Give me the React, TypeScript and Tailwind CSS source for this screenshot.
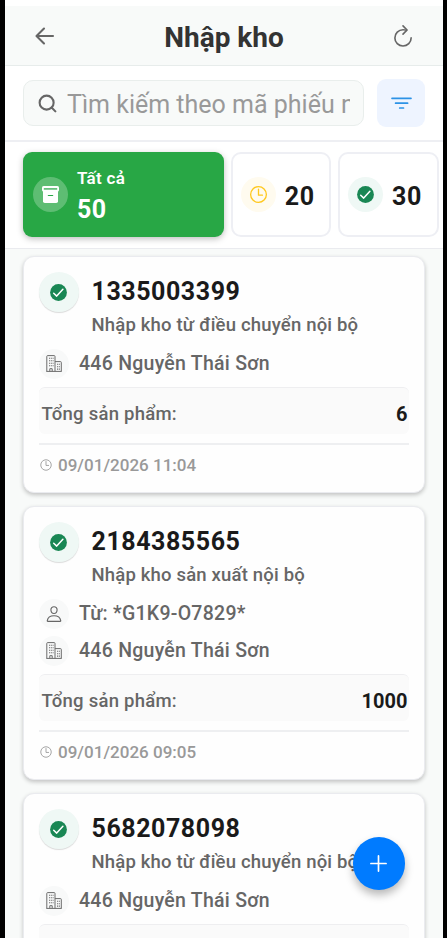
import { useState } from "react"
import { Search } from "lucide-react"
import { IoAdd, IoPersonOutline, IoRefreshOutline, IoTimeOutline } from "react-icons/io5"

type Receipt = {
  code: string
  type: string
  from?: string
  branch: string
  total: number
  createdAt: string
}

const receipts: Receipt[] = [
  { code: "1335003399", type: "Nhập kho từ điều chuyển nội bộ", branch: "446 Nguyễn Thái Sơn", total: 6, createdAt: "09/01/2026 11:04" },
  { code: "2184385565", type: "Nhập kho sản xuất nội bộ", from: "*G1K9-O7829*", branch: "446 Nguyễn Thái Sơn", total: 1000, createdAt: "09/01/2026 09:05" },
  { code: "5682078098", type: "Nhập kho từ điều chuyển nội bộ", branch: "446 Nguyễn Thái Sơn", total: 12, createdAt: "09/01/2026 08:41" },
]

const BackIcon = () => (
  <svg viewBox="0 0 20 18" className="h-[18px] w-5" fill="none" stroke="#666" strokeWidth="2.1" strokeLinecap="round" strokeLinejoin="round">
    <path d="M9 1.6 1.5 9 9 16.4M2 9h16" />
  </svg>
)

const CheckIcon = () => (
  <svg viewBox="0 0 17 17" className="h-[17px] w-[17px]" fill="none">
    <circle cx="8.5" cy="8.5" r="8.4" fill="#198754" />
    <path d="m3.7 9.2 3 2.9 6.2-6.9" stroke="#fff" strokeWidth="1.5" strokeLinecap="round" strokeLinejoin="round" />
  </svg>
)

const ArchiveIcon = () => (
  <svg viewBox="0 0 17 17" className="h-[17px] w-[17px]" fill="none">
    <path d="M1 5h15v10.2a1.8 1.8 0 0 1-1.8 1.8H2.8A1.8 1.8 0 0 1 1 15.2z" fill="#fff" />
    <rect width="17" height="5.6" rx="1.6" fill="#fff" />
    <path d="M1.8 2.9h13.4" stroke="#62bd78" strokeWidth="1.7" />
    <path d="M6.3 9.5h4.4" stroke="#28a745" strokeWidth="1.1" strokeLinecap="round" />
  </svg>
)

const FilterIcon = () => (
  <svg viewBox="0 0 21 12" className="h-3 w-[21px]" fill="none" stroke="#2c92e6" strokeWidth="1.7" strokeLinecap="round">
    <path d="M1 1.3h19M4.6 6.2h12M8.7 11h3.8" />
  </svg>
)

const BuildingIcon = () => (
  <svg viewBox="0 0 16 17" className="h-[17px] w-4" fill="none" stroke="#6b6b6b">
    <path d="M.8 16.3V1.4A.8.8 0 0 1 1.6.6h6.6a.8.8 0 0 1 .8.8v14.9M9 6.6h5.5a.8.8 0 0 1 .8.8v8.9M.3 16.4h15.4M3.8 16.3v-2.6h2.4v2.6" />
    <path d="M3 3.2h4.6M3 5.7h4.6M3 8.2h4.6M3 10.7h4.6M11 9.3h3M11 11.7h3M11 14.1h3" strokeWidth="1.1" strokeDasharray="1.1 .7" />
  </svg>
)

const InfoRow = ({ icon, text }: { icon: any; text: string }) => (
  <div className="flex h-[37px] items-center">
    <div className="flex h-[30px] w-[30px] shrink-0 items-center justify-center rounded-full bg-[#f8f9f9] text-[#666]">{icon}</div>
    <span className="ml-[10px] mt-px whitespace-nowrap text-[19.5px] font-medium leading-[26px] tracking-[0.26px] text-[#666]">{text}</span>
  </div>
)

const ReceiptCard = ({ receipt }: { receipt: Receipt }) => {
  return (
    <div className="shrink-0 rounded-[11px] border border-[#eaebef] bg-[#fefefe] px-[15px] pb-[13px] pt-[15px] shadow-[0_2px_4px_rgba(0,0,0,0.22)]">
      {/* Code + type */}
      <div className="flex h-[73px]">
        <div className="flex h-10 w-10 shrink-0 items-center justify-center rounded-full bg-[#eff8f5] pr-px shadow-[0_1px_1px_rgba(0,0,0,0.14)]">
          <CheckIcon />
        </div>
        <div className="ml-[12.5px] flex flex-col whitespace-nowrap">
          <span className="mt-[3.5px] text-[25px] font-bold leading-8 tracking-[0.55px] text-[#1a1a1a]">{receipt.code}</span>
          <span className="mt-[4px] text-[18.5px] font-medium leading-[26px] tracking-[0.18px] text-[#666]">{receipt.type}</span>
        </div>
      </div>
      {receipt.from && <InfoRow icon={<IoPersonOutline className="h-[18px] w-[18px]" />} text={`Từ: ${receipt.from}`} />}
      <InfoRow icon={<BuildingIcon />} text={receipt.branch} />
      {/* Total */}
      <div className="mt-[5px] flex h-[47px] items-center justify-between rounded-md border-t border-[#eeeef0] bg-[#fafafa] pl-[2.5px] pr-[1.5px] pt-[5.5px]">
        <span className="text-[18.5px] font-medium leading-none tracking-[0.25px] text-[#666]">Tổng sản phẩm:</span>
        <span className="text-[20px] font-bold leading-none text-[#1a1a1a]">{receipt.total}</span>
      </div>
      <div className="mt-[9px] flex h-[36px] items-end border-t-2 border-[#eeeff1] text-[#999]">
        <IoTimeOutline className="mb-[7px] h-[14px] w-[14px]" />
        <span className="mb-px ml-[5px] text-[17px] font-medium leading-[26px] tracking-[0.02px]">{receipt.createdAt}</span>
      </div>
    </div>
  )
}

export default function App() {
  const [search, setSearch] = useState("")

  return (
    <div className="relative h-[938px] w-[447px] overflow-hidden bg-black pl-[5px] pr-[4px] font-['Roboto',sans-serif]">
      <div className="flex h-full flex-col overflow-hidden bg-[#f8faf9]">
        {/* Header */}
        <div className="h-[6px] shrink-0 bg-white" />
        <div className="flex h-[60px] shrink-0 items-center justify-between border-b border-[#e7eceb] bg-[#f8faf9] pl-[30px] pr-[27px]">
          <button aria-label="back"><BackIcon /></button>
          <h1 className="pl-[3px] pt-[5px] text-[28px] font-bold leading-8 text-[#333]">Nhập kho</h1>
          <button aria-label="refresh"><IoRefreshOutline className="h-[26px] w-[26px] text-[#666]" /></button>
        </div>

        {/* Search */}
        <div className="flex h-[76px] shrink-0 items-center border-b-2 border-[#eeeff3] bg-white pl-[18px] pr-[18px]">
          <div className="flex h-[46px] w-[341px] items-center rounded-[10px] border border-[#e9eeec] bg-[#f8faf9] px-[13px]">
            <Search className="h-[21px] w-[21px] shrink-0 text-[#666]" strokeWidth={2.4} />
            <input
              value={search}
              onChange={(e) => setSearch(e.target.value)}
              placeholder="Tìm kiếm theo mã phiếu nhập"
              className="ml-[9px] mt-[3px] w-0 flex-1 text-[25px] outline-none placeholder:text-[#999]"
            />
          </div>
          <button aria-label="filter" className="ml-[13px] flex h-12 w-12 items-center justify-center rounded-[9px] bg-[#eef4ff]">
            <FilterIcon />
          </button>
        </div>

        {/* Status tabs */}
        <div className="flex h-[107px] shrink-0 gap-[6.7px] border-b border-[#eaebef] bg-white pl-[18px] pt-[10px]">
          <button className="flex h-[85px] w-[201px] shrink-0 items-center rounded-[9px] bg-[#28a745] pl-[10px] text-left text-white shadow-[0_2px_6px_rgba(0,0,0,0.25)]">
            <div className="flex h-[35px] w-[35px] items-center justify-center rounded-full bg-white/25">
              <ArchiveIcon />
            </div>
            <div className="ml-[9px] flex flex-col pt-[2px]">
              <span className="text-[17px] font-semibold leading-6 tracking-[0.3px]">Tất cả</span>
              <span className="mt-[4px] text-[25px] font-bold leading-8 tracking-[0.5px]">50</span>
            </div>
          </button>
          <button className="flex h-[85px] w-[100.6px] shrink-0 items-center rounded-[10px] border-2 border-[#eeeff4] bg-white pl-[8px]">
            <div className="flex h-[35px] w-[35px] items-center justify-center rounded-full bg-[#fffbef]">
              <IoTimeOutline className="h-[21px] w-[21px] text-[#ffc81f]" />
            </div>
            <span className="ml-[9px] mt-[5px] text-[25px] font-bold tracking-[0.6px] text-[#1a1a1a]">20</span>
          </button>
          <button className="flex h-[85px] w-[101px] shrink-0 items-center rounded-[10px] border-2 border-[#eeeff4] bg-white pl-[8px]">
            <div className="flex h-[35px] w-[35px] items-center justify-center rounded-full bg-[#eff8f5]">
              <CheckIcon />
            </div>
            <span className="ml-[9px] mt-[5px] text-[25px] font-bold tracking-[0.6px] text-[#1a1a1a]">30</span>
          </button>
        </div>

        {/* List */}
        <div className="flex min-h-0 flex-1 flex-col gap-[13px] overflow-hidden px-[18px] pt-[7px]">
          {receipts.map((receipt) => (
            <ReceiptCard key={receipt.code} receipt={receipt} />
          ))}
        </div>
      </div>

      {/* Add button */}
      <button aria-label="add" className="absolute left-[352.5px] top-[837px] flex h-[52.5px] w-[52.5px] items-center justify-center rounded-full bg-[#007bff] text-white shadow-[0_5px_9px_rgba(0,0,0,0.28)]">
        <IoAdd className="h-[27px] w-[27px]" />
      </button>
    </div>
  )
}
